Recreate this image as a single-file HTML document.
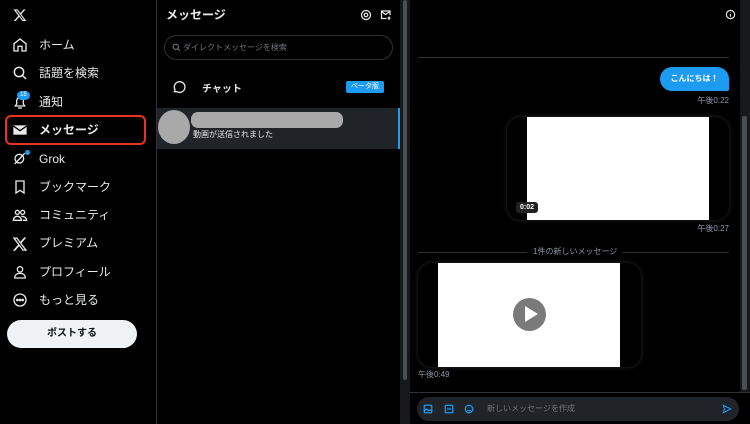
<!DOCTYPE html>
<html><head><meta charset="utf-8"><style>
*{margin:0;padding:0;box-sizing:border-box}
body{width:750px;height:424px;background:#000;color:#e7e9ea;font-family:"Liberation Sans","Noto Sans CJK JP",sans-serif;position:relative;overflow:hidden}
.a{position:absolute}
.nav{font-size:12px;color:#e7e9ea;left:39px;line-height:16px}
.ic{position:absolute;left:12px;width:16px;height:16px}
.t{font-size:8px;color:#8b98a5}
</style></head><body>
<svg class="a" style="left:13px;top:8px" width="14" height="14" viewBox="0 0 24 24"><path fill="#e7e9ea" d="M18.2 2.3h3.4l-7.4 8.4 8.7 11.5h-6.8l-5.3-7-6.1 7H1.3l7.9-9L.9 2.3h7l4.8 6.4zm-1.2 17.9h1.9L7 4.2H5z"/></svg>
<svg class="ic" style="top:37px" viewBox="0 0 24 24" fill="none" stroke="#e7e9ea" stroke-width="2"><path d="M3 10l9-7 9 7v11h-6v-7h-6v7H3z"/></svg>
<div class="a nav" style="top:37px">ホーム</div>
<svg class="ic" style="top:65px" viewBox="0 0 24 24" fill="none" stroke="#e7e9ea" stroke-width="2.2"><circle cx="10.5" cy="10.5" r="7"/><path d="M16 16l5 5"/></svg>
<div class="a nav" style="top:65px">話題を検索</div>
<svg class="ic" style="top:94px" viewBox="0 0 24 24" fill="none" stroke="#e7e9ea" stroke-width="2"><path d="M5 18h14l-2-3V10a5 5 0 0 0-10 0v5z M9 21h6"/></svg>
<div class="a" style="left:17px;top:91px;width:13px;height:9px;border-radius:5px;background:#1d9bf0;font-size:6px;color:#fff;text-align:center;line-height:9px">15</div>
<div class="a nav" style="top:94px">通知</div>
<div class="a" style="left:5px;top:115px;width:141px;height:30px;border:2px solid #e8341c;border-radius:6px"></div>
<svg class="ic" style="top:122px" viewBox="0 0 24 24"><path fill="#e7e9ea" d="M2 5h20v14H2z"/><path d="M2 6l10 7 10-7" fill="none" stroke="#000" stroke-width="2"/></svg>
<div class="a nav" style="top:122px;font-weight:bold">メッセージ</div>
<svg class="ic" style="top:150px" viewBox="0 0 24 24" fill="none" stroke="#e7e9ea" stroke-width="2"><circle cx="11" cy="13" r="6.5"/><path d="M4 21L19 5"/></svg>
<div class="a" style="left:25px;top:150px;width:5px;height:5px;border-radius:50%;background:#1d9bf0"></div>
<div class="a nav" style="top:151px">Grok</div>
<svg class="ic" style="top:179px" viewBox="0 0 24 24" fill="none" stroke="#e7e9ea" stroke-width="2"><path d="M6 3h12v18l-6-4-6 4z"/></svg>
<div class="a nav" style="top:179px">ブックマーク</div>
<svg class="ic" style="top:207px" viewBox="0 0 24 24" fill="none" stroke="#e7e9ea" stroke-width="2"><circle cx="8" cy="8" r="3"/><circle cx="16" cy="8" r="3"/><path d="M2 20c0-4 3-6 6-6s6 2 6 6zM14 14c4 0 8 2 8 6h-6"/></svg>
<div class="a nav" style="top:207px">コミュニティ</div>
<svg class="ic" style="top:236px" viewBox="0 0 24 24"><path fill="#e7e9ea" d="M18.2 2.3h3.4l-7.4 8.4 8.7 11.5h-6.8l-5.3-7-6.1 7H1.3l7.9-9L.9 2.3h7l4.8 6.4zm-1.2 17.9h1.9L7 4.2H5z"/></svg>
<div class="a nav" style="top:235px">プレミアム</div>
<svg class="ic" style="top:264px" viewBox="0 0 24 24" fill="none" stroke="#e7e9ea" stroke-width="2"><circle cx="12" cy="8" r="4"/><path d="M4 21c0-5 4-7 8-7s8 2 8 7z"/></svg>
<div class="a nav" style="top:264px">プロフィール</div>
<svg class="ic" style="top:292px" viewBox="0 0 24 24" fill="none" stroke="#e7e9ea" stroke-width="2"><circle cx="12" cy="12" r="9"/><circle cx="8" cy="12" r="1" fill="#e7e9ea"/><circle cx="12" cy="12" r="1" fill="#e7e9ea"/><circle cx="16" cy="12" r="1" fill="#e7e9ea"/></svg>
<div class="a nav" style="top:292px">もっと見る</div>
<div class="a" style="left:7px;top:320px;width:130px;height:28px;border-radius:14px;background:#eff3f4;color:#0f1419;font-size:10px;font-weight:bold;text-align:center;line-height:28px">ポストする</div>
<div class="a" style="left:156px;top:0;width:1px;height:424px;background:#2f3336"></div>
<div class="a" style="left:166px;top:6px;font-size:12px;font-weight:bold">メッセージ</div>
<svg class="a" style="left:360px;top:9px" width="12" height="12" viewBox="0 0 24 24" fill="none" stroke="#e7e9ea" stroke-width="2.5"><circle cx="12" cy="12" r="3.5"/><circle cx="12" cy="12" r="9"/></svg>
<svg class="a" style="left:380px;top:9px" width="12" height="12" viewBox="0 0 24 24" fill="none" stroke="#e7e9ea" stroke-width="2.5"><path d="M20 12V4H3v15h10M3 5l8 6 9-6M18 15v7M15 18h6"/></svg>
<div class="a" style="left:164px;top:35px;width:229px;height:25px;border:1px solid #2f3336;border-radius:13px"></div>
<svg class="a" style="left:172px;top:43px" width="9" height="9" viewBox="0 0 24 24" fill="none" stroke="#71767b" stroke-width="3"><circle cx="10" cy="10" r="7"/><path d="M15 15l6 6"/></svg>
<div class="a" style="left:183px;top:42px;font-size:8px;color:#71767b">ダイレクトメッセージを検索</div>
<svg class="a" style="left:171px;top:79px" width="16" height="16" viewBox="0 0 24 24" fill="none" stroke="#e7e9ea" stroke-width="2"><path d="M5 19l1-3a8 8 0 1 1 3 3z"/></svg>
<div class="a" style="left:202px;top:80px;font-size:10px;font-weight:bold">チャット</div>
<div class="a" style="left:346px;top:81px;width:38px;height:12px;background:#1d9bf0;border-radius:2px;font-size:7px;color:#fff;text-align:center;line-height:12px">ベータ版</div>
<div class="a" style="left:157px;top:108px;width:243px;height:41px;background:#202327"></div>
<div class="a" style="left:398px;top:108px;width:2px;height:41px;background:#1d9bf0"></div>
<div class="a" style="left:158px;top:110px;width:32px;height:34px;border-radius:50%;background:#a9a9a9"></div>
<div class="a" style="left:191px;top:112px;width:152px;height:16px;border-radius:7px;background:#a9a9a9"></div>
<div class="a" style="left:193px;top:129px;font-size:8px">動画が送信されました</div>
<div class="a" style="left:400px;top:0;width:10px;height:424px;background:#16181a"></div>
<div class="a" style="left:403px;top:0;width:4px;height:380px;border-radius:2px;background:#4a4d52"></div>
<svg class="a" style="left:725px;top:9px" width="11" height="11" viewBox="0 0 24 24" fill="none" stroke="#e7e9ea" stroke-width="2.5"><circle cx="12" cy="12" r="9"/><path d="M12 11v6M12 7v1"/></svg>
<div class="a" style="left:418px;top:57px;width:311px;height:1px;background:#2f3336"></div>
<div class="a" style="left:660px;top:67px;width:69px;height:24px;background:#1d9bf0;border-radius:12px 12px 2px 12px;color:#fff;font-size:8px;font-weight:bold;text-align:center;line-height:24px">こんにちは！</div>
<div class="a t" style="right:21px;top:95px">午後0:22</div>
<div class="a" style="left:507px;top:117px;width:222px;height:103px;border-radius:14px;background:#000;box-shadow:0 0 5px #2a2a2a"></div>
<div class="a" style="left:527px;top:117px;width:182px;height:103px;background:#fff"></div>
<div class="a" style="left:516px;top:202px;width:22px;height:11px;background:#222;border-radius:3px;color:#fff;font-size:7px;font-weight:bold;text-align:center;line-height:11px">0:02</div>
<div class="a t" style="right:21px;top:223px">午後0:27</div>
<div class="a" style="left:418px;top:252px;width:311px;height:1px;background:#2f3336"></div>
<div class="a" style="left:527px;top:246px;padding:0 6px;background:#000;font-size:8px;color:#8b98a5">1件の新しいメッセージ</div>
<div class="a" style="left:418px;top:263px;width:223px;height:104px;border-radius:14px;background:#000;box-shadow:0 0 5px #2a2a2a"></div>
<div class="a" style="left:438px;top:263px;width:182px;height:104px;background:#fff"></div>
<div class="a" style="left:513px;top:298px;width:33px;height:33px;border-radius:50%;background:#7a7a7a"></div>
<svg class="a" style="left:523px;top:305px" width="16" height="18" viewBox="0 0 16 18"><path d="M2 1l13 8-13 8z" fill="#fff"/></svg>
<div class="a t" style="left:418px;top:369px">午後0:49</div>
<div class="a" style="left:740px;top:0;width:10px;height:392px;background:#16181a"></div>
<div class="a" style="left:742px;top:116px;width:5px;height:274px;border-radius:2px;background:#4a4d52"></div>
<div class="a" style="left:410px;top:392px;width:340px;height:1px;background:#2f3336"></div>
<div class="a" style="left:417px;top:397px;width:322px;height:24px;border-radius:12px;background:#202327"></div>
<svg class="a" style="left:423px;top:404px" width="10" height="10" viewBox="0 0 24 24" fill="none" stroke="#1d9bf0" stroke-width="3"><rect x="3" y="3" width="18" height="18" rx="2"/><path d="M3 17l6-5 5 4 3-2 4 3"/></svg>
<svg class="a" style="left:444px;top:404px" width="10" height="10" viewBox="0 0 24 24" fill="none" stroke="#1d9bf0" stroke-width="3"><rect x="3" y="3" width="18" height="18" rx="2"/><path d="M7 12h10"/></svg>
<svg class="a" style="left:464px;top:404px" width="10" height="10" viewBox="0 0 24 24" fill="none" stroke="#1d9bf0" stroke-width="3"><circle cx="12" cy="12" r="9"/><path d="M8 15c2 2 6 2 8 0M9 9v1M15 9v1"/></svg>
<div class="a" style="left:487px;top:403px;font-size:8px;color:#71767b">新しいメッセージを作成</div>
<svg class="a" style="left:722px;top:404px" width="10" height="10" viewBox="0 0 24 24" fill="none" stroke="#1d9bf0" stroke-width="2.5"><path d="M3 3l18 9-18 9 3-9z"/></svg>
</body></html>
